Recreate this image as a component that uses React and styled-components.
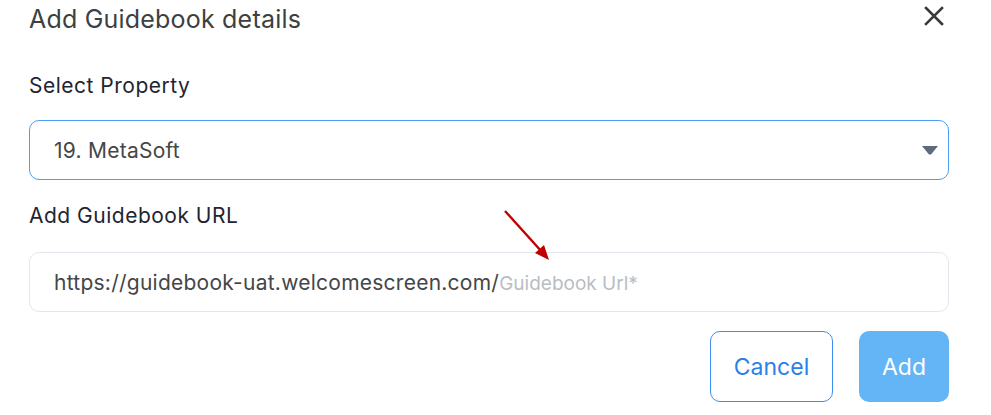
import React from 'react';
import styled, { createGlobalStyle } from 'styled-components';

const GlobalStyle = createGlobalStyle`
	html, body {
		margin: 0;
		padding: 0;
		background: #ffffff;
	}
	body {
		font-family: Inter, "Noto Sans", sans-serif;
	}
`;

const Dialog = styled.div`
	position: relative;
	width: 991px;
	height: 415px;
	box-sizing: border-box;
	padding: 4px 42px 0 29px;
	display: flex;
	flex-direction: column;
`;

const Header = styled.div`
	display: flex;
	align-items: center;
	justify-content: space-between;
	height: 30px;
`;

const Title = styled.h2`
	margin: 0;
	font-size: 25px;
	font-weight: 400;
	color: #3d3f42;
	letter-spacing: 0.2px;
`;

const CloseButton = styled.button`
	border: none;
	background: none;
	padding: 0;
	margin-right: 3px;
	margin-top: -6px;
	width: 24px;
	height: 24px;
	display: flex;
	align-items: center;
	justify-content: center;
	color: #3a3a3a;
	cursor: pointer;
`;

const Label = styled.div`
	font-size: 21px;
	letter-spacing: 0.5px;
	color: #1f2532;
	margin-top: ${(p) => p.$top}px;
	height: 24px;
	line-height: 24px;
`;

const Field = styled.div`
	margin-top: ${(p) => p.$top}px;
	width: 920px;
	height: 60px;
	box-sizing: border-box;
	border: ${(p) => (p.$active ? '1.5px solid #4b9df6' : '1px solid #e2e7ee')};
	border-radius: 10px;
	display: flex;
	align-items: center;
	padding: 0 10px 0 24px;
	font-size: 21px;
	letter-spacing: 0.25px;
	color: #444648;
`;

const FieldText = styled.span`
	flex: 1;
`;

const Placeholder = styled.span`
	color: #b9bdc2;
	font-size: 19px;
	letter-spacing: 0;
`;

const Actions = styled.div`
	display: flex;
	justify-content: flex-end;
	gap: 26px;
	margin-top: 19px;
	width: 920px;
`;

const Button = styled.button`
	height: 71px;
	border-radius: 10px;
	font-family: Inter, "Noto Sans", sans-serif;
	font-size: 23px;
	cursor: pointer;
	box-sizing: border-box;
	padding: 0;
	width: ${(p) => p.$w}px;
	border: ${(p) => (p.$primary ? 'none' : '1px solid #3d8ef2')};
	background: ${(p) => (p.$primary ? '#64b5f6' : '#ffffff')};
	color: ${(p) => (p.$primary ? '#ffffff' : '#2a7fea')};
`;

const Arrow = styled.svg`
	position: absolute;
	left: 500px;
	top: 206px;
`;

export default function App() {
	return (
		<>
			<GlobalStyle />
			<Dialog>
				<Header>
					<Title>Add Guidebook details</Title>
					<CloseButton aria-label="Close">
						<svg width="20" height="20" viewBox="0 0 20 20">
							<path d="M2 2 L18 18 M18 2 L2 18" stroke="currentColor" strokeWidth="2.6" strokeLinecap="square" />
						</svg>
					</CloseButton>
				</Header>
				<Label $top={40}>Select Property</Label>
				<Field $top={22} $active>
					<FieldText>19. MetaSoft</FieldText>
					<svg width="16" height="9" viewBox="0 0 16 9">
						<path d="M0 0 H16 L9 8.5 H7 Z" fill="#5f6b7d" />
					</svg>
				</Field>
				<Label $top={24}>Add Guidebook URL</Label>
				<Field $top={24}>
					<FieldText>
						https://guidebook-uat.welcomescreen.com/<Placeholder>Guidebook Url*</Placeholder>
					</FieldText>
				</Field>
				<Actions>
					<Button $w={123}>Cancel</Button>
					<Button $w={90} $primary>Add</Button>
				</Actions>
				<Arrow width="60" height="60" viewBox="0 0 60 60">
					<path d="M5 5 L42 46" stroke="#c00000" strokeWidth="2.4" />
					<path d="M49 54 L35 47 L44 39 Z" fill="#c00000" />
				</Arrow>
			</Dialog>
		</>
	);
}
